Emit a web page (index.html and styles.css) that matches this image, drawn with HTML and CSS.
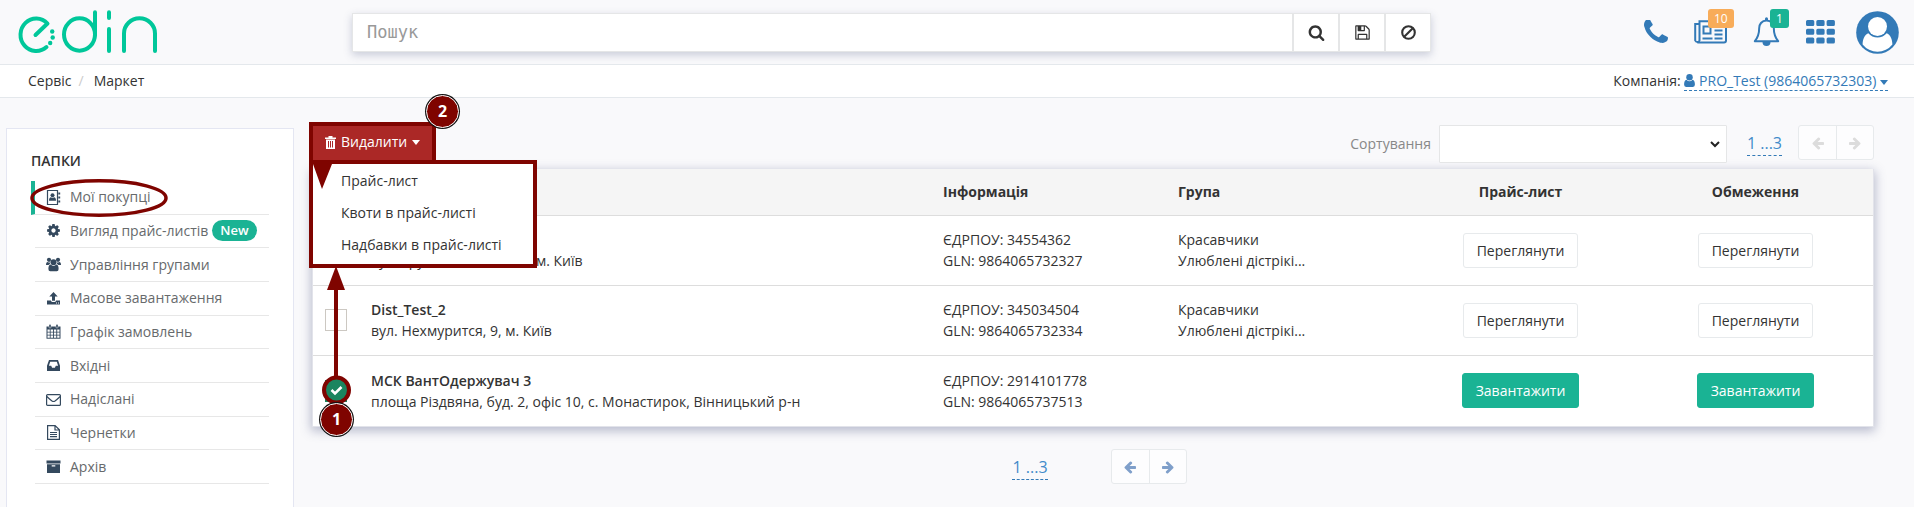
FILE: index.html
```html
<!DOCTYPE html>
<html lang="uk">
<head>
<meta charset="utf-8">
<title>EDIN — Маркет</title>
<meta name="viewport" content="width=device-width, initial-scale=1">
<link rel="stylesheet" href="styles.css">
</head>
<body>
<svg class="sprite" aria-hidden="true">
  <symbol id="i-left" viewBox="0 0 1792 1792"><path d="M1664 896v128q0 53-32.500 90.500t-84.500 37.500h-704l293 294q38 36 38 90t-38 90l-75 76q-37 37-90 37-52 0-91-37l-651-652q-37-37-37-90 0-52 37-91l651-650q38-38 91-38 52 0 90 38l75 74q38 38 38 91t-38 91l-293 293h704q52 0 84.500 37.500t32.500 90.500z"/></symbol>
  <symbol id="i-user" viewBox="0 0 10 12"><circle cx="5" cy="3" r="3"/><path d="M2.200 5.200Q0 5.600 0 9.800 0 12 1.800 12h6.400Q10 12 10 9.800 10 5.600 7.800 5.200 6.500 6.600 5 6.600T2.200 5.200z"/></symbol>
</svg>

<header class="header">
  <a class="logo" href="#" aria-label="edin">
    <svg width="140" height="44" viewBox="18 10 140 44" fill="none" stroke="#00c79a" stroke-width="4" stroke-linecap="round" stroke-linejoin="round">
      <path d="M35.500 35 47.500 23.500A15.700 16.200 0 1 0 46.500 47"/>
      <ellipse cx="79.500" cy="34.500" rx="15.500" ry="16.200"/>
      <path d="M95 12.300V35M109 12.300V18M109 29V51M124 51V33.500a15.500 15.200 0 0 1 31 0V51"/>
      <g fill="#00c79a" stroke="none"><circle cx="50.200" cy="43" r="2.200"/><circle cx="52.700" cy="37.500" r="2.200"/><circle cx="52.200" cy="31.500" r="2.200"/></g>
    </svg>
  </a>
  <form class="search">
    <input class="search-input" type="text" placeholder="Пошук" aria-label="Пошук">
    <button class="search-btn" type="button" aria-label="Шукати"><svg width="17" height="17" viewBox="0 0 1792 1792"><path d="M1216 832q0-185-131.500-316.500t-316.500-131.500-316.500 131.500-131.500 316.500 131.500 316.500 316.500 131.500 316.500-131.500 131.500-316.500zm512 832q0 52-38 90t-90 38q-54 0-90-38l-343-342q-179 124-399 124-143 0-273.500-55.500t-225-150-150-225-55.500-273.500 55.500-273.500 150-225 225-150 273.500-55.500 273.500 55.500 225 150 150 225 55.500 273.500q0 220-124 399l343 343q37 37 37 90z"/></svg></button>
    <button class="search-btn" type="button" aria-label="Зберегти"><svg width="17" height="17" viewBox="0 0 1792 1792"><path d="M512 1536h768v-384h-768v384zm896 0h128v-896q0-14-10-38.500t-20-34.500l-281-281q-10-10-34-20t-39-10v416q0 40-28 68t-68 28h-576q-40 0-68-28t-28-68v-416h-128v1280h128v-416q0-40 28-68t68-28h832q40 0 68 28t28 68v416zm-384-928v-320q0-13-9.500-22.500t-22.500-9.500h-192q-13 0-22.500 9.500t-9.500 22.500v320q0 13 9.500 22.500t22.500 9.500h192q13 0 22.500-9.500t9.500-22.500zm640 32v928q0 40-28 68t-68 28h-1344q-40 0-68-28t-28-68v-1344q0-40 28-68t68-28h928q40 0 88 20t76 48l280 280q28 28 48 76t20 88z"/></svg></button>
    <button class="search-btn" type="button" aria-label="Очистити"><svg width="15" height="15" viewBox="0 0 15 15" fill="none" stroke="#333" stroke-width="2.100"><circle cx="7.500" cy="7.500" r="6.300"/><path d="M3.200 11.800 11.800 3.200"/></svg></button>
  </form>
  <nav class="tools">
    <div class="tools-icons">
      <a class="tool" href="#" aria-label="Телефон"><svg width="24" height="24" viewBox="192 192 1408 1408"><path d="M1600 1240q0 27-10 70.500t-21 68.500q-21 50-122 106-94 51-186 51-27 0-52.500-3.500t-57.500-12.500-47.500-14.500-55.500-20.500-49-18q-98-35-175-83-128-79-264.500-215.500t-215.500-264.500q-48-77-83-175-3-9-18-49t-20.500-55.500-14.500-47.500-12.500-57.500-3.500-52.500q0-92 51-186 56-101 106-122 25-11 68.500-21t70.500-10q14 0 21 3 18 6 53 76 11 19 30 54t35 63.500 31 53.500q3 4 17.500 25t21.500 35.500 7 28.500q0 20-28.500 50t-62 55-62 53-28.500 46q0 9 5 22.500t8.500 20.500 14 24 11.500 19q76 137 174 235t235 174q2 1 19 11.500t24 14 20.500 8.500 22.500 5q18 0 46-28.500t53-62 55-62 50-28.500q14 0 28.500 7t35.500 21.500 25 17.500q25 15 53.500 31t63.500 35 54 30q70 35 76 53 3 7 3 21z"/></svg></a>
      <a class="tool" href="#" aria-label="Новини"><svg width="33" height="24" viewBox="0 0 33 24" fill="none" stroke="#337ab7" stroke-width="2"><path d="M5 4H1.200V20.500a2.300 2.300 0 0 0 4.300 0V1.200H32V20.500a2 2 0 0 1-2 2H3.300"/><path d="M9.500 6.500h7v7h-7zM8.500 18.500h10M20.500 6.500h8M20.500 10.500h8M20.500 14.500h8M20.500 18.500h8"/></svg><span class="badge badge-orange">10</span></a>
      <a class="tool" href="#" aria-label="Сповіщення"><svg width="27" height="30" viewBox="0 0 27 30"><path d="M13.500 3.600C8.500 3.600 6.200 7.500 6.200 11 6.200 17.500 4.500 21 1.800 24.200H25.200C22.500 21 20.800 17.500 20.800 11 20.800 7.500 18.500 3.600 13.500 3.600z" fill="none" stroke="#337ab7" stroke-width="2" stroke-linejoin="round"/><path d="M12 1.800a1.500 1.500 0 0 1 3 0V4h-3zM9.500 25h8a4 4 0 0 1-8 0z"/></svg><span class="badge badge-green">1</span></a>
      <a class="tool" href="#" aria-label="Меню"><svg width="29" height="24" viewBox="0 0 29 24"><path d="M1.500 0h5.300a1.500 1.500 0 0 1 1.500 1.500v3a1.500 1.500 0 0 1-1.500 1.500H1.500A1.500 1.500 0 0 1 0 4.500v-3A1.500 1.500 0 0 1 1.500 0z" id="cell"/><use href="#cell" x="10.300"/><use href="#cell" x="20.600"/><use href="#cell" y="8.800"/><use href="#cell" x="10.300" y="8.800"/><use href="#cell" x="20.600" y="8.800"/><use href="#cell" y="17.400"/><use href="#cell" x="10.300" y="17.400"/><use href="#cell" x="20.600" y="17.400"/></svg></a>
    </div>
    <a class="tool" href="#" aria-label="Профіль"><svg width="43" height="43" viewBox="0 0 43 43"><circle cx="21.500" cy="21.500" r="21.300"/><g fill="#fff"><circle cx="21.500" cy="15.500" r="9.500"/><path d="M12.300 22.300C8.300 23.800 6.700 29 6.600 33.500A19 19 0 0 0 36.400 33.500C36.300 29 34.700 23.800 30.700 22.300A12 12 0 0 1 12.300 22.300z"/></g></svg></a>
  </nav>
</header>

<div class="crumbs">
  <nav class="crumb-path"><a class="crumb" href="#">Сервіс</a><span class="crumb-sep">/</span><a class="crumb" href="#">Маркет</a></nav>
  <div class="company">Компанія: <a class="company-link" href="#"><svg width="11" height="13"><use href="#i-user"/></svg> PRO_Test (9864065732303) <i class="caret"></i></a></div>
</div>

<div class="page">
  <aside class="sidebar">
    <h2 class="sidebar-title">ПАПКИ</h2>
    <ul class="folders">
      <li class="folder folder-active"><a class="folder-link" href="#"><svg class="f-ico" viewBox="0 0 15 15"><path d="M1.500.500h10v14h-10z" fill="none" stroke="#34495e" stroke-width="1.200"/><circle cx="6.500" cy="5.200" r="2"/><path d="M3 10.700Q3 7.500 5 7.200 6.500 8.200 8 7.200 10 7.500 10 10.700zM12.300 2.500h1.900v2h-1.900zM12.300 6.500h1.900v2h-1.900zM12.300 10.500h1.900v2h-1.900z"/></svg>Мої покупці</a></li>
      <li class="folder"><a class="folder-link" href="#"><svg class="f-ico" viewBox="0 0 1792 1792"><path d="M1152 896q0-106-75-181t-181-75-181 75-75 181 75 181 181 75 181-75 75-181zm512-109v222q0 12-8 23t-20 13l-185 28q-19 54-39 91 35 50 107 138 10 12 10 25t-9 23q-27 37-99 108t-94 71q-12 0-26-9l-138-108q-44 23-91 38-16 136-29 186-7 28-36 28h-222q-14 0-24.500-8.500t-11.500-21.500l-28-184q-49-16-90-37l-141 107q-10 9-25 9-14 0-25-11-126-114-165-168-7-10-7-23 0-12 8-23 15-21 51-66.500t54-70.500q-27-50-41-99l-183-27q-13-2-21-12.500t-8-23.500v-222q0-12 8-23t19-13l186-28q14-46 39-92-40-57-107-138-10-12-10-24 0-10 9-23 26-36 98.500-107.500t94.500-71.500q13 0 26 10l138 107q44-23 91-38 16-136 29-186 7-28 36-28h222q14 0 24.500 8.500t11.500 21.500l28 184q49 16 90 37l142-107q9-9 24-9 13 0 25 10 129 119 165 170 7 8 7 22 0 12-8 23-15 21-51 66.500t-54 70.500q26 50 41 98l183 28q13 2 21 12.500t8 23.500z"/></svg>Вигляд прайс-листів<span class="pill">New</span></a></li>
      <li class="folder"><a class="folder-link" href="#"><svg class="f-ico" viewBox="0 0 15 15"><circle cx="3" cy="2.800" r="2.100"/><circle cx="12" cy="2.800" r="2.100"/><circle cx="7.500" cy="5.200" r="3"/><path d="M1.700 4.900Q0 5 0 8h2.600Q3.300 7.100 4 7 3.800 6.200 4 5.500 3 5.700 1.700 4.900zM13.300 4.900Q15 5 15 8h-2.600Q11.700 7.100 11 7q.200-.800 0-1.500 1 .200 2.300-.600zM4.700 7.600Q2.400 7.800 2.400 12q0 2.300 1.900 2.300h6.400q1.900 0 1.900-2.300 0-4.200-2.300-4.400-1.400 1.400-2.800 1.400T4.700 7.600z"/></svg>Управління групами</a></li>
      <li class="folder"><a class="folder-link" href="#"><svg class="f-ico" viewBox="0 0 15 15"><path d="M7.500 1 11.700 5.500H9v4.300H6V5.500H3.300zM1 9.500h4q.3 1.500 1.500 1.500h2Q9.700 11 10 9.500h4v4H1zm9 2v1h1v-1zm2 0v1h1v-1z" fill-rule="evenodd"/></svg>Масове завантаження</a></li>
      <li class="folder"><a class="folder-link" href="#"><svg class="f-ico" viewBox="0 0 15 15"><path d="M.500 2.500h14V14.700H.500z"/><g fill="#fff"><path d="M1.500 5.500h2.300v2.200H1.500zM4.600 5.500h2.400v2.200H4.600zM7.900 5.500h2.400v2.200H7.900zM11.200 5.500h2.300v2.200h-2.300zM1.500 8.500h2.300v2.200H1.500zM4.600 8.500h2.400v2.200H4.600zM7.900 8.500h2.400v2.200H7.900zM11.200 8.500h2.300v2.200h-2.300zM1.500 11.500h2.300v2.200H1.500zM4.600 11.500h2.400v2.200H4.600zM7.900 11.500h2.400v2.200H7.900zM11.200 11.500h2.300v2.200h-2.300z"/></g><path d="M3 .500h2v3.400H3zM10 .500h2v3.400h-2z" stroke="#fff" stroke-width=".400"/></svg>Графік замовлень</a></li>
      <li class="folder"><a class="folder-link" href="#"><svg class="f-ico" viewBox="0 0 15 15"><path d="M3 2h9l2 5.800V13H1V7.800zM4.200 3.700 2.900 7.800h2.300L6.100 9.700h2.800l.9-1.900h2.300L10.800 3.700z" fill-rule="evenodd"/></svg>Вхідні</a></li>
      <li class="folder"><a class="folder-link" href="#"><svg class="f-ico" viewBox="0 0 15 15" fill="none" stroke="#34495e" stroke-width="1.200"><rect x=".600" y="2.600" width="13.800" height="10.800" rx="1"/><path d="M.800 4.500Q4 7.500 6 9q1.500 1 3 0 2-1.500 5.200-4.500"/></svg>Надіслані</a></li>
      <li class="folder"><a class="folder-link" href="#"><svg class="f-ico" viewBox="0 0 15 15" fill="none" stroke="#34495e" stroke-width="1.200"><path d="M1.600.600h7.500l4.300 4.200v9.600H1.600zM9 .800V5h4.200M4 7.500h7M4 9.500h7M4 11.700h7"/></svg>Чернетки</a></li>
      <li class="folder"><a class="folder-link" href="#"><svg class="f-ico" viewBox="0 0 15 15"><path d="M.500 1.500h14v3H.500zM1 5.300h13V14H1zM5.700 6.300v1.200h3.600V6.300z" fill-rule="evenodd"/></svg>Архів</a></li>
    </ul>
    <svg class="mark-ellipse" width="140" height="40" viewBox="0 0 140 40" fill="none" stroke="#7f0400" stroke-width="3.500" aria-hidden="true"><ellipse cx="70" cy="20" rx="67" ry="17.200"/></svg>
  </aside>

  <main class="main">
    <div class="toolbar">
      <div class="dropdown">
        <button class="btn-delete" type="button"><svg width="11" height="13" viewBox="0 0 11 13"><path d="M3.500 0h4v1.500H11V3H0V1.500h3.500z"/><path d="M1 3.500h9V13H1z"/><path d="M3.500 5v6.500M5.500 5v6.500M7.500 5v6.500" stroke="#ab2826"/></svg>Видалити<i class="caret"></i></button>
        <ul class="menu">
          <li><a class="menu-link" href="#">Прайс-лист</a></li>
          <li><a class="menu-link" href="#">Квоти в прайс-листі</a></li>
          <li><a class="menu-link" href="#">Надбавки в прайс-листі</a></li>
        </ul>
      </div>
      <div class="sorting">
        <label class="sort-label" for="sort">Сортування</label>
        <select class="sort-select" id="sort"><option></option></select>
        <a class="pages" href="#">1 ...3</a>
        <div class="pager pager-off"><button class="pager-btn" type="button" disabled aria-label="Назад"><svg width="14" height="14"><use href="#i-left"/></svg></button><button class="pager-btn" type="button" disabled aria-label="Вперед"><svg class="flip" width="14" height="14"><use href="#i-left"/></svg></button></div>
      </div>
    </div>

    <table class="grid">
      <colgroup><col class="c-check"><col><col class="c-part"><col class="c-part"><col class="c-part"><col class="c-part"></colgroup>
      <thead>
        <tr><th><input class="check" type="checkbox" aria-label="Обрати всі"></th><th></th><th>Інформація</th><th>Група</th><th class="mid">Прайс-лист</th><th class="mid">Обмеження</th></tr>
      </thead>
      <tbody>
        <tr><td><input class="check" type="checkbox" aria-label="Dist_Test_1"></td><td><br>вул. Грушевського, 12а, м. Київ</td><td>ЄДРПОУ: 34554362<br>GLN: 9864065732327</td><td>Красавчики<br>Улюблені дістрікі...</td><td class="mid"><button class="btn" type="button">Переглянути</button></td><td class="mid"><button class="btn" type="button">Переглянути</button></td></tr>
        <tr><td><input class="check" type="checkbox" aria-label="Dist_Test_2"></td><td><b class="name">Dist_Test_2</b><br>вул. Нехмурится, 9, м. Київ</td><td>ЄДРПОУ: 345034504<br>GLN: 9864065732334</td><td>Красавчики<br>Улюблені дістрікі...</td><td class="mid"><button class="btn" type="button">Переглянути</button></td><td class="mid"><button class="btn" type="button">Переглянути</button></td></tr>
        <tr><td><input class="check" type="checkbox" checked aria-label="МСК ВантОдержувач 3"></td><td><b class="name">МСК ВантОдержувач 3</b><br>площа Різдвяна, буд. 2, офіс 10, с. Монастирок, Вінницький р-н</td><td>ЄДРПОУ: 2914101778<br>GLN: 9864065737513</td><td></td><td class="mid"><button class="btn btn-green" type="button">Завантажити</button></td><td class="mid"><button class="btn btn-green" type="button">Завантажити</button></td></tr>
      </tbody>
    </table>

    <div class="bottom">
      <a class="pages" href="#">1 ...3</a>
      <div class="pager"><button class="pager-btn" type="button" aria-label="Назад"><svg width="14" height="14"><use href="#i-left"/></svg></button><button class="pager-btn" type="button" aria-label="Вперед"><svg class="flip" width="14" height="14"><use href="#i-left"/></svg></button></div>
    </div>

    <svg class="marks" width="60" height="310" viewBox="0 98 60 310" aria-hidden="true">
      <g fill="#7f0400"><path d="M1 164H20L10 189zM24 266 33 290H15zM22 288h4v90h-4z"/></g>
      <circle cx="24.500" cy="390" r="12.500" fill="#1b855f" stroke="#7f0400" stroke-width="4"/>
      <path d="M19.500 390 23 393.500 29.500 387" fill="none" stroke="#fff" stroke-width="2.600"/>
    </svg>
    <span class="step step-one">1</span>
    <span class="step step-two">2</span>
  </main>
</div>
</body>
</html>
```

FILE: styles.css
```css
* { box-sizing: border-box; }
body {
  margin: 0;
  min-height: 100vh;
  display: flex;
  flex-direction: column;
  background: #f9f9fb;
  color: #333;
  font: 14px/20px "Open Sans", "Noto Sans", sans-serif;
}
a { color: #337ab7; text-decoration: none; }
button, input, select { font: inherit; color: inherit; margin: 0; }
.sprite { position: absolute; width: 0; height: 0; }

.header {
  display: flex;
  align-items: center;
  justify-content: space-between;
  height: 65px;
  padding: 0 15px 0 18px;
  border-bottom: 1px solid #e4e8ec;
}
.logo svg { display: block; }
.search {
  flex: 1;
  max-width: 1079px;
  height: 39px;
  margin: 0 auto 0 194px;
  display: flex;
  background: #fff;
  border: 1px solid #e5e6e7;
  box-shadow: 0 3px 8px rgba(60, 70, 120, .25);
}
.search-input {
  flex: 1;
  min-width: 0;
  padding: 0 14px;
  border: 0;
  background: none;
  font: 17px "DejaVu Sans Mono", monospace;
}
.search-input::placeholder { color: #999; }
.search-btn {
  width: 46px;
  padding: 0;
  display: flex;
  align-items: center;
  justify-content: center;
  background: none;
  border: 0;
  border-left: 2px solid #e5e6e7;
}
.search-btn svg { fill: #333; }
.search-btn svg[fill="none"] { fill: none; }
.tools { display: flex; align-items: center; gap: 21px; }
.tools-icons { display: flex; align-items: center; gap: 26px; }
.tool { position: relative; display: block; }
.tool svg { display: block; fill: #337ab7; }
.tool svg[fill="none"] { fill: none; }
.badge {
  position: absolute;
  bottom: 16px;
  left: 14px;
  min-width: 19px;
  padding: 0 6px;
  border-radius: 3px;
  color: #fff;
  font-size: 12px;
  line-height: 19px;
  text-align: center;
}
.badge-orange { background: #f8ac59; }
.badge-green { left: 17px; bottom: 19px; background: #1ab394; }

.crumbs {
  display: flex;
  justify-content: space-between;
  align-items: center;
  height: 33px;
  padding: 0 26px 0 28px;
  background: #fff;
  border-bottom: 1px solid #e4e8ec;
}
.crumb { color: #333; }
.crumb-sep { color: #ccc; padding: 0 10px 0 7px; }
.company-link { border-bottom: 1px dashed #337ab7; }
.company-link svg { fill: #337ab7; vertical-align: -1px; }
.caret {
  display: inline-block;
  vertical-align: middle;
  border: 4px solid transparent;
  border-top: 5px solid currentColor;
  border-bottom: 0;
}

.page { flex: 1; display: flex; }
.sidebar {
  position: relative;
  flex: 0 0 288px;
  margin: 30px 0 0 6px;
  padding: 22px 24px 0;
  background: #fff;
  border: 1px solid #e4e6f2;
  border-bottom: 0;
}
.sidebar-title { margin: 0 0 10px; font-size: 14px; line-height: 20px; font-weight: 600; }
.folders { margin: 0; padding: 0; list-style: none; display: grid; grid-auto-rows: 1fr; min-height: 303px; }
.folder { display: flex; margin-left: 4px; border-bottom: 1px solid #e7e7e7; }
.folder-active { margin-left: 0; border-left: 4px solid #1ab394; border-bottom-color: #e7e7e7; }
.folder-link { flex: 1; display: flex; align-items: center; padding-left: 11px; color: #676a6c; white-space: nowrap; }
.f-ico { width: 15px; height: 15px; margin-right: 9px; fill: #34495e; }
.f-ico[fill="none"] { fill: none; }
.pill {
  margin-left: 4px;
  padding: 0 8px;
  border-radius: 11px;
  background: #1ab394;
  color: #fff;
  font-size: 13px;
  line-height: 21px;
  font-weight: 600;
}
.mark-ellipse { position: absolute; left: 22px; top: 49px; }

.main { position: relative; flex: 1; min-width: 0; margin-left: 18px; padding: 27px 40px 0 0; }
.toolbar { display: flex; justify-content: space-between; align-items: flex-start; }
.dropdown { position: relative; margin: 1px 0 0 1px; }
.btn-delete {
  display: flex;
  align-items: center;
  gap: 5px;
  height: 34px;
  padding: 0 12px 2px;
  border: 0;
  background: #ab2826;
  color: #fff;
  box-shadow: 0 0 0 4px #7f0400;
}
.btn-delete svg { fill: #fff; }
.menu {
  position: absolute;
  z-index: 2;
  left: 0;
  top: 38px;
  width: 220px;
  margin: 0;
  padding: 1px 0 3px;
  list-style: none;
  background: #fff;
  box-shadow: 0 0 0 4px #7f0400;
}
.menu-link { display: block; padding: 0 28px; color: #333; line-height: 32px; }
.sorting { display: flex; align-items: flex-start; }
.sort-label { line-height: 38px; color: #888; margin-right: 8px; }
.sort-select {
  width: 288px;
  height: 38px;
  padding: 0 24px 0 8px;
  appearance: none;
  background: #fff url("data:image/svg+xml,%3Csvg xmlns='http://www.w3.org/2000/svg' width='10' height='7' fill='none' stroke='%23222' stroke-width='2'%3E%3Cpath d='M1 1l4 4 4-4'/%3E%3C/svg%3E") no-repeat right 6px center;
  border: 1px solid #e5e6e7;
  border-radius: 1px;
}
.pages { border-bottom: 1px dashed #337ab7; color: #428bca; font-size: 16px; line-height: 23px; margin-top: 7px; }
.sorting .pages { margin-left: 20px; margin-right: 16px; }
.pager { display: flex; height: 35px; border: 1px solid #e7eaec; border-radius: 3px; background: #fdfdfe; }
.pager-btn { width: 37px; padding: 0; border: 0; background: none; display: flex; align-items: center; justify-content: center; }
.pager-btn + .pager-btn { border-left: 1px solid #e7eaec; }
.pager-btn svg { fill: #7f9fca; }
.pager-off svg { fill: #dcdcdc; }
.flip { transform: scaleX(-1); }

.grid {
  width: 100%;
  margin-top: 6px;
  table-layout: fixed;
  border-collapse: separate;
  border-spacing: 0;
  background: #fff;
  border: 1px solid #e2e3ea;
  border-top: 0;
  box-shadow: 0 3px 10px 1px rgba(60, 70, 120, .35);
}
.grid th, .grid td { padding: 0 10px 1px; text-align: left; }
.grid th { height: 47px; background: #f5f5f5; border-bottom: 1px solid #ddd; font-weight: 700; }
.grid td { height: 70px; border-bottom: 1px solid #ddd; line-height: 21px; }
.grid tbody tr:last-child td { border-bottom: 0; }
.grid .mid { text-align: center; }
.grid th:first-child, .grid td:first-child { padding-left: 12px; }
.c-check { width: 48px; }
.c-part { width: 235px; }
.name { font-weight: 600; }
.check {
  display: block;
  appearance: none;
  width: 22px;
  height: 22px;
  background: #fff;
  border: 1px solid #ccc8c2;
}
.check:checked { background: #1b855f; border-color: #1b855f; }
.btn {
  height: 35px;
  padding: 0 13px;
  background: #fff;
  border: 1px solid #e7eaec;
  border-radius: 3px;
}
.btn-green { background: #1ab394; border-color: #1ab394; color: #fff; }
.bottom { display: flex; justify-content: center; gap: 63px; padding: 22px 0 12px 13px; }
.bottom .pages { align-self: flex-start; }

.marks { position: absolute; z-index: 3; left: 0; top: 0; }
.step {
  position: absolute;
  z-index: 4;
  width: 33px;
  height: 33px;
  border: 1px solid #fff;
  border-radius: 50%;
  background: #7f0400;
  box-shadow: 0 0 0 1px #111;
  color: #fff;
  font-weight: 700;
  font-size: 16px;
  line-height: 31px;
  text-align: center;
}
.step-one { left: 8px; top: 305px; }
.step-two { left: 114px; top: -3px; }
```
